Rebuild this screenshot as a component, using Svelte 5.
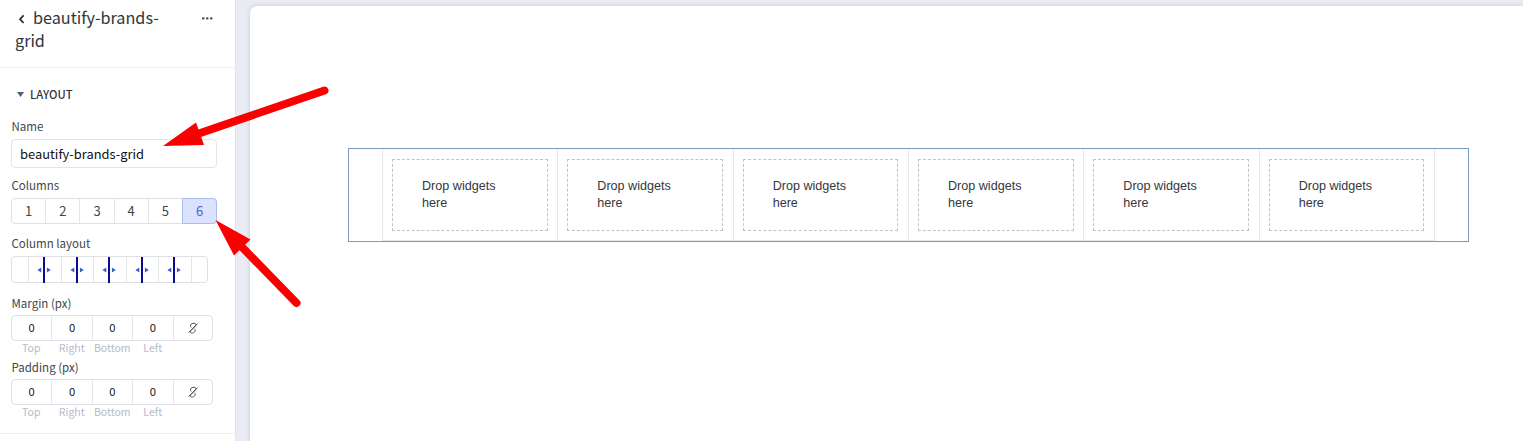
<script>
  const columns = [1, 2, 3, 4, 5, 6];
  const handles = [1, 2, 3, 4, 5];
  const sides = ['Top', 'Right', 'Bottom', 'Left'];
  const spacing = ['Margin (px)', 'Padding (px)'];
</script>

<div class="editor">
  <aside>
    <header>
      <h1>
        <svg class="back" width="8" height="12" viewBox="0 0 8 12"><path d="M5.6 1.4 2 5.2 5.6 9" /></svg>beautify-brands-grid
      </h1>
      <svg class="more" width="11" height="3" viewBox="0 0 11 3">
        <rect x="0" y=".3" width="2.5" height="2.3" rx=".8" /><rect x="4" y=".3" width="2.5" height="2.3" rx=".8" /><rect x="8" y=".3" width="2.5" height="2.3" rx=".8" />
      </svg>
    </header>
    <section>
      <h2><svg width="7" height="5" viewBox="0 0 7 5"><path d="M0 0H7L3.5 5Z" /></svg>LAYOUT</h2>
      <div class="label name-label">Name</div>
      <div class="input">beautify-brands-grid</div>
      <div class="label columns-label">Columns</div>
      <div class="segments">
        {#each columns as n}
          <div class="segment" class:active={n === 6}>{n}</div>
        {/each}
      </div>
      <div class="label layout-label">Column layout</div>
      <div class="resizer">
        <div class="edge"></div>
        {#each handles as h}
          <div class="handle">
            <svg width="14" height="26" viewBox="0 0 14 26">
              <path class="bar" d="M7 0V26" />
              <path class="tri" d="M4.3 10.4V15.6L.4 13ZM9.9 10.4V15.6L13.8 13Z" />
            </svg>
          </div>
        {/each}
      </div>
      {#each spacing as title}
        <div class="spacing">
          <div class="label">{title}</div>
          <div class="values">
            {#each sides as side}<div>0</div>{/each}
            <div>
              <svg class="link" width="10" height="12" viewBox="0 0 10 12">
                <path d="M3.2 5.4C1.9 4.4 2.4 1.3 4.9 1.3H6.3C8 1.3 8.5 2.7 7.4 4L3.2 8.3C1.6 9.8 2 10.9 3.6 10.9H4.6C6.8 10.9 8 8.1 6.6 6.8M9.6 1.6.6 10.6" />
              </svg>
            </div>
          </div>
          <div class="sides">
            {#each sides as side}<span>{side}</span>{/each}
          </div>
        </div>
      {/each}
    </section>
  </aside>
  <main>
    <div class="page">
      <div class="grid">
        {#each columns as n}
          <div class="cell"><div class="drop">Drop widgets<br />here</div></div>
        {/each}
      </div>
    </div>
  </main>
  <svg class="arrows" width="1523" height="441" viewBox="0 0 1523 441">
    <path class="shaft" d="M324.5 90.5 196 134.5M296.5 303 239 244" />
    <path d="M163 146 196 122.5 204 145ZM215.5 220 250.5 239.5 234 255.5Z" />
  </svg>
</div>

<style>
  :global(body) { margin: 0; overflow: hidden; }
  .editor { position: relative; display: flex; width: 1523px; height: 441px; overflow: hidden; font-family: "Noto Sans CJK SC", "Noto Sans", sans-serif; color: #42464c; background: #e9ecf5; }
  .editor * { box-sizing: border-box; }
  aside { width: 236px; height: 441px; flex: none; background: #fff; border-right: 1px solid #e0e3ec; }
  header { display: flex; justify-content: space-between; height: 68px; padding: 6px 22px 0 15px; border-bottom: 1px solid #f1f2f4; }
  h1 { margin: 0; width: 160px; font-size: 16.2px; font-weight: 400; line-height: 23px; color: #30353b; }
  .back { margin: 0 7px 0 3px; vertical-align: -2px; }
  .back path { fill: none; stroke: #25292e; stroke-width: 1.7; }
  .more { margin-top: 11px; fill: #4a4e55; }
  section { height: 366px; padding: 16px 18px 0 11px; border-bottom: 1px solid #ebedf0; }
  h2 { display: flex; align-items: center; gap: 6px; margin: 0; padding-left: 6px; height: 20px; font-size: 11.2px; font-weight: 500; line-height: 20px; color: #30353b; }
  h2 svg { fill: #5b5e66; }
  .label { height: 18px; padding-left: .5px; font-size: 11.5px; line-height: 18px; white-space: nowrap; }
  .name-label { margin-top: 13px; }
  .input { height: 29px; margin-top: 4px; padding-left: 8px; border: 1px solid #e2e4e8; border-radius: 4px; font-size: 12.9px; line-height: 27px; color: #111; }
  .columns-label { margin-top: 8px; }
  .segments { display: flex; height: 26px; margin-top: 4px; border: 1px solid #dedfe3; border-radius: 4px; }
  .segment { flex: 1; text-align: center; font-size: 13px; line-height: 23px; border-right: 1px solid #e5e6e9; }
  .active { margin: -1px; background: #dbe2ff; border: 1px solid #adbce9; border-radius: 0 4px 4px 0; color: #4864c6; flex: 0 0 35px; }
  .layout-label { margin-top: 10px; }
  .resizer { display: flex; width: 197px; height: 27px; margin-top: 4px; border: 1px solid #dedfe3; border-radius: 4px; }
  .edge { width: 17px; border-right: 1px solid #e5e6e9; }
  .handle { width: 32.5px; padding-left: 8px; height: 25px; border-right: 1px solid #e5e6e9; }
  .handle svg { display: block; }
  .bar { stroke: #0c0c93; stroke-width: 2; }
  .tri { fill: #3d5dc4; }
  .spacing { height: 64px; }
  .resizer + .spacing { margin-top: 11px; }
  .values { display: flex; width: 202px; height: 26px; margin-top: 3px; border: 1px solid #dedfe3; border-radius: 4px; }
  .values div { flex: 0 0 40.4px; text-align: center; border-right: 1px solid #e5e6e9; font-size: 11.2px; line-height: 22px; color: #15181b; }
  .values div:last-child { flex: 1; border: 0; }
  .link { vertical-align: -2px; fill: none; stroke: #4e535b; stroke-width: 1; }
  .sides { display: flex; width: 162px; height: 14px; font-size: 10.5px; line-height: 14px; color: #b5bac6; }
  .sides span { flex: 1; text-align: center; }
  main { flex: 1; padding: 6px 0 0 14px; }
  .page { height: 448px; padding: 142px 54px 0 98px; background: #fff; border-radius: 7px 0 0 0; box-shadow: 0 0 5px #c5c9d2; }
  .grid { display: flex; width: 1121px; height: 94px; padding: 0 33px; border: 1px solid #7e99c1; }
  .cell { flex: 1; padding: 10px 9.5px 9px 9px; border-left: 1px solid #e5e9ef; border-bottom: 1px solid #e5e9ef; }
  .cell:last-child { border-right: 1px solid #e5e9ef; }
  .drop { height: 72px; padding: 18px 0 0 29px; border: 1px dashed #c3c3c3; font-family: "Liberation Sans", Arial, sans-serif; font-size: 12.6px; line-height: 17px; color: #34373c; }
  .arrows { position: absolute; inset: 0; fill: #fa0000; pointer-events: none; }
  .shaft { fill: none; stroke: #fa0000; stroke-width: 8; stroke-linecap: round; }
</style>
